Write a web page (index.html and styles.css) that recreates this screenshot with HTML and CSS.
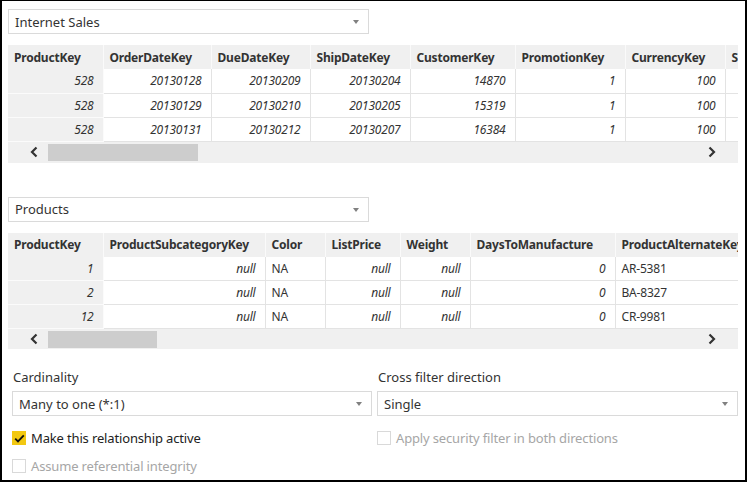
FILE: index.html
```html
<!DOCTYPE html>
<html>
<head>
<meta charset="utf-8">
<link rel="stylesheet" href="styles.css">
</head>
<body>
<div class="frame">
  <div class="select table-select">
    <span class="select-text">Internet Sales</span>
    <span class="caret"></span>
  </div>

  <div class="preview">
    <div class="grid-wrap">
      <table class="grid grid-sales">
        <colgroup>
          <col style="width:95px"><col style="width:108px"><col style="width:99px"><col style="width:100px"><col style="width:105px"><col style="width:110px"><col style="width:100px"><col style="width:100px">
        </colgroup>
        <thead>
          <tr><th>ProductKey</th><th>OrderDateKey</th><th>DueDateKey</th><th>ShipDateKey</th><th>CustomerKey</th><th>PromotionKey</th><th>CurrencyKey</th><th>SalesTerritoryKey</th></tr>
        </thead>
        <tbody>
          <tr><td class="key num">528</td><td class="num">20130128</td><td class="num">20130209</td><td class="num">20130204</td><td class="num">14870</td><td class="num">1</td><td class="num">100</td><td class="num"></td></tr>
          <tr><td class="key num">528</td><td class="num">20130129</td><td class="num">20130210</td><td class="num">20130205</td><td class="num">15319</td><td class="num">1</td><td class="num">100</td><td class="num"></td></tr>
          <tr><td class="key num">528</td><td class="num">20130131</td><td class="num">20130212</td><td class="num">20130207</td><td class="num">16384</td><td class="num">1</td><td class="num">100</td><td class="num"></td></tr>
        </tbody>
      </table>
    </div>
    <div class="hscroll">
      <svg class="arrow" width="10" height="12" viewBox="0 0 10 12"><path d="M7.5 1.5 L3 6 L7.5 10.5" fill="none" stroke="#333" stroke-width="2.2"/></svg>
      <div class="track"><div class="thumb thumb-sales"></div></div>
      <svg class="arrow" width="10" height="12" viewBox="0 0 10 12"><path d="M2.5 1.5 L7 6 L2.5 10.5" fill="none" stroke="#333" stroke-width="2.2"/></svg>
    </div>
  </div>

  <div class="select table-select second">
    <span class="select-text">Products</span>
    <span class="caret"></span>
  </div>

  <div class="preview">
    <div class="grid-wrap">
      <table class="grid grid-products">
        <colgroup>
          <col style="width:95px"><col style="width:162px"><col style="width:60px"><col style="width:75px"><col style="width:70px"><col style="width:145px"><col style="width:140px">
        </colgroup>
        <thead>
          <tr><th>ProductKey</th><th>ProductSubcategoryKey</th><th>Color</th><th>ListPrice</th><th>Weight</th><th>DaysToManufacture</th><th>ProductAlternateKey</th></tr>
        </thead>
        <tbody>
          <tr><td class="key num">1</td><td class="num">null</td><td class="txt">NA</td><td class="num">null</td><td class="num">null</td><td class="num">0</td><td class="txt">AR-5381</td></tr>
          <tr><td class="key num">2</td><td class="num">null</td><td class="txt">NA</td><td class="num">null</td><td class="num">null</td><td class="num">0</td><td class="txt">BA-8327</td></tr>
          <tr><td class="key num">12</td><td class="num">null</td><td class="txt">NA</td><td class="num">null</td><td class="num">null</td><td class="num">0</td><td class="txt">CR-9981</td></tr>
        </tbody>
      </table>
    </div>
    <div class="hscroll short">
      <svg class="arrow" width="10" height="12" viewBox="0 0 10 12"><path d="M7.5 1.5 L3 6 L7.5 10.5" fill="none" stroke="#333" stroke-width="2.2"/></svg>
      <div class="track"><div class="thumb thumb-products"></div></div>
      <svg class="arrow" width="10" height="12" viewBox="0 0 10 12"><path d="M2.5 1.5 L7 6 L2.5 10.5" fill="none" stroke="#333" stroke-width="2.2"/></svg>
    </div>
  </div>

  <div class="options">
    <div class="option-col">
      <div class="label">Cardinality</div>
      <div class="select">
        <span class="select-text">Many to one (*:1)</span>
        <span class="caret"></span>
      </div>
      <label class="check active">
        <span class="box checked">
          <svg width="11" height="9" viewBox="0 0 11 9"><path d="M1.2 4.6 L4 7.4 L9.8 1.3" fill="none" stroke="#111" stroke-width="1.8"/></svg>
        </span>
        <span>Make this relationship active</span>
      </label>
      <label class="check disabled">
        <span class="box"></span>
        <span>Assume referential integrity</span>
      </label>
    </div>
    <div class="option-col right">
      <div class="label">Cross filter direction</div>
      <div class="select">
        <span class="select-text">Single</span>
        <span class="caret"></span>
      </div>
      <label class="check disabled">
        <span class="box"></span>
        <span>Apply security filter in both directions</span>
      </label>
    </div>
  </div>
</div>
</body>
</html>
```

FILE: styles.css
```css
* { box-sizing: border-box; }

html, body {
  margin: 0;
  padding: 0;
  background: #fff;
}

body {
  font-family: "Noto Sans", "Open Sans", sans-serif;
  color: #333;
}

.frame {
  width: 747px;
  height: 482px;
  border-top: 1px solid #000;
  border-left: 2px solid #000;
  border-right: 2px solid #000;
  border-bottom: 2px solid #000;
  padding: 8px 0 0 6px;
  overflow: hidden;
}

.select {
  position: relative;
  height: 25px;
  border: 1px solid #dadada;
  background: #fff;
  display: flex;
  align-items: center;
  padding-left: 6px;
  font-size: 13px;
  color: #333;
}

.table-select {
  width: 361px;
}

.table-select.second {
  margin-top: 34px;
}

.caret {
  position: absolute;
  right: 9px;
  top: 10px;
  width: 0;
  height: 0;
  border-left: 3.5px solid transparent;
  border-right: 3.5px solid transparent;
  border-top: 4px solid #808080;
}

.preview {
  margin-top: 11px;
  width: 730px;
}

.grid-wrap {
  width: 730px;
  overflow: hidden;
}

.grid {
  border-collapse: collapse;
  table-layout: fixed;
  width: max-content;
}

.grid th,
.grid td {
  height: 24px;
  padding: 0 6px;
  white-space: nowrap;
  overflow: hidden;
  font-size: 12px;
  letter-spacing: -0.2px;
}

.grid th {
  background: #f0f0f0;
  font-weight: 700;
  text-align: left;
  color: #333;
  border-right: 1px solid #fafafa;
}

.grid td {
  background: #fff;
  border: 1px solid #e3e3e3;
  color: #333;
}

.grid tr:first-child td { border-top: none; }

.grid td.key {
  background: #f0f0f0;
  border-color: #fbfbfb;
  border-left: none;
}

.grid td.num {
  text-align: right;
  font-style: italic;
  padding-right: 9px;
}

.grid td.txt {
  text-align: left;
  padding-left: 6px;
}

.hscroll {
  height: 21px;
  background: #f0f0f0;
  display: flex;
  align-items: center;
  padding: 0 21px 0 21px;
  gap: 9px;
}

.hscroll.short {
  height: 20px;
}

.track {
  flex: 1;
  height: 17px;
}

.thumb {
  height: 17px;
  background: #cdcdcd;
}

.thumb-sales { width: 150px; }
.thumb-products { width: 109px; }

.options {
  display: flex;
  gap: 5px;
  margin-top: 18px;
  padding-left: 4px;
}

.option-col {
  width: 360px;
  display: flex;
  flex-direction: column;
}

.option-col.right {
  width: 361px;
}

.label {
  font-size: 13px;
  line-height: 20px;
  color: #333;
  margin-bottom: 4px;
  padding-left: 1px;
}

.check {
  display: flex;
  align-items: center;
  gap: 5px;
  font-size: 13px;
  letter-spacing: -0.15px;
  height: 14px;
  margin-top: 15px;
}

.check + .check {
  margin-top: 14px;
}

.check.active { color: #222; }
.check.disabled { color: #a6a6a6; }

.box {
  width: 14px;
  height: 14px;
  border: 1px solid #d9d9d9;
  display: flex;
  align-items: center;
  justify-content: center;
  background: #fff;
}

.box.checked {
  background: #f2c811;
  border-color: #f2c811;
}
```
